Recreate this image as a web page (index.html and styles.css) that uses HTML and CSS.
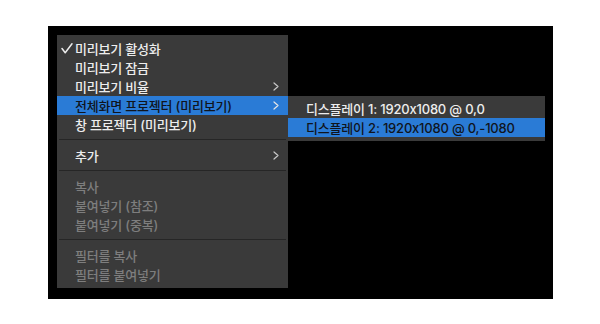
FILE: index.html
```html
<!DOCTYPE html>
<html lang="ko">
  <head>
    <meta charset="UTF-8" />
    <meta name="viewport" content="width=device-width, initial-scale=1.0" />
    <title>미리보기 메뉴</title>
    <link rel="stylesheet" href="styles.css">
  </head>
  <body>
    <div class="stage">
      <ul class="menu">
        <li class="item">
          <span class="mark">
            <svg width="12" height="11" viewBox="0 0 12 11"><path d="M1 5.5 L4.2 9.8 L11 0.8" fill="none" stroke="#ececec" stroke-width="1.5" stroke-linecap="round" stroke-linejoin="round"/></svg>
          </span>
          <span class="label">미리보기 활성화</span>
        </li>
        <li class="item"><span class="mark"></span><span class="label">미리보기 잠금</span></li>
        <li class="item">
          <span class="mark"></span><span class="label">미리보기 비율</span>
          <svg class="chevron" width="6" height="9" viewBox="0 0 6 9"><path d="M1 1 L5 4.5 L1 8" fill="none" stroke="#c8c8c8" stroke-width="1.2" stroke-linecap="round" stroke-linejoin="round"/></svg>
        </li>
        <li class="item active">
          <span class="mark"></span><span class="label">전체화면 프로젝터 (미리보기)</span>
          <svg class="chevron" width="6" height="9" viewBox="0 0 6 9"><path d="M1 1 L5 4.5 L1 8" fill="none" stroke="#e6e6e6" stroke-width="1.2" stroke-linecap="round" stroke-linejoin="round"/></svg>

          <!-- 하위 메뉴 -->
          <ul class="menu submenu">
            <li class="item"><span class="label">디스플레이 1: 1920x1080 @ 0,0</span></li>
            <li class="item active"><span class="label">디스플레이 2: 1920x1080 @ 0,-1080</span></li>
          </ul>
        </li>
        <li class="item"><span class="mark"></span><span class="label">창 프로젝터 (미리보기)</span></li>
        <li class="separator"></li>
        <li class="item">
          <span class="mark"></span><span class="label">추가</span>
          <svg class="chevron" width="6" height="9" viewBox="0 0 6 9"><path d="M1 1 L5 4.5 L1 8" fill="none" stroke="#c8c8c8" stroke-width="1.2" stroke-linecap="round" stroke-linejoin="round"/></svg>
        </li>
        <li class="separator"></li>
        <li class="item disabled"><span class="mark"></span><span class="label">복사</span></li>
        <li class="item disabled"><span class="mark"></span><span class="label">붙여넣기 (참조)</span></li>
        <li class="item disabled"><span class="mark"></span><span class="label">붙여넣기 (중복)</span></li>
        <li class="separator"></li>
        <li class="item disabled"><span class="mark"></span><span class="label">필터를 복사</span></li>
        <li class="item disabled"><span class="mark"></span><span class="label">필터를 붙여넣기</span></li>
      </ul>
    </div>
  </body>
</html>
```

FILE: styles.css
```css
:root {
  --menu-bg: #3a3a3a;
  --text: #ededed;
  --muted: #7e7e7e;
  --accent: #2a7bd6;
}

body {
  margin: 0;
  background: #fff;
  font-family: Inter, 'Noto Sans CJK KR', sans-serif;
  font-size: 13px;
  font-weight: 500;
  letter-spacing: -0.2px;
}

.stage {
  margin: 26px 0 0 48px;
  width: 505px;
  height: 273px;
  box-sizing: border-box;
  padding: 9px 0 0 9px;
  background: #000;
}

.menu {
  list-style: none;
  margin: 0;
  width: 231px;
  padding: 4px 0;
  background: var(--menu-bg);
  color: var(--text);
}

.item {
  position: relative;
  display: flex;
  align-items: center;
  height: 19px;
  padding-left: 4px;
  white-space: nowrap;
}

.mark {
  display: flex;
  align-items: center;
  width: 14px;
  height: 19px;
}

.chevron {
  margin-left: auto;
  margin-right: 9px;
}

.item.active {
  background: var(--accent);
  color: #10141c;
}

.item.disabled {
  color: var(--muted);
}

.separator {
  height: 1px;
  margin: 5px 2px 6px;
  background: #262626;
}

.submenu {
  position: absolute;
  left: 100%;
  top: 0;
  width: 257px;
  padding: 3px 0 4px;
  color: var(--text);
}

.submenu .item {
  padding-left: 18px;
}
```
